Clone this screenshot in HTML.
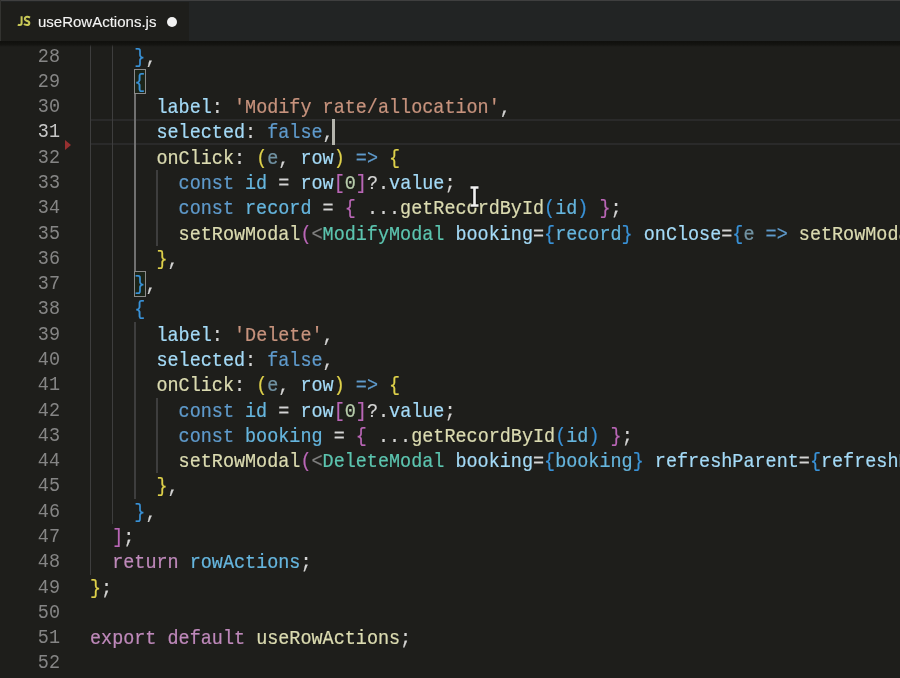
<!DOCTYPE html><html><head><meta charset="utf-8"><style>
*{margin:0;padding:0;box-sizing:border-box}
html,body{width:900px;height:678px;overflow:hidden;background:#1e1e1a}
body{position:relative;font-family:"Liberation Mono",monospace;filter:blur(0.4px) saturate(0.85)}
#tabs{position:absolute;left:0;top:0;width:900px;height:41px;background:#222424;border-top:1px solid #3f3f3f}
#tab{position:absolute;left:1px;top:1px;width:188px;height:40px;background:#1e1e1a}
#lb{position:absolute;left:0;top:0;width:1px;height:41px;background:#33332f}
#jsic{position:absolute;left:18px;top:14px;font-family:"Liberation Sans",sans-serif;font-weight:bold;font-size:11px;color:#cbcb41;letter-spacing:0px}
#tname{-webkit-text-stroke:0.12px #f4f4f4;position:absolute;left:38px;top:12.5px;font-family:"Liberation Sans",sans-serif;font-size:15px;color:#f4f4f4}
#dot{position:absolute;left:166.5px;top:16.8px;width:10px;height:10px;border-radius:50%;background:#f2f2f2}
#shadow{position:absolute;left:0;top:41px;width:900px;height:6px;background:linear-gradient(#10100d 0,#131310 55%,rgba(30,30,26,0) 100%)}
.ln{position:absolute;left:0;transform:translateY(1.2px) scaleY(1.1);transform-origin:0 17.54px;width:60.0px;text-align:right;color:#858585;font-size:18.464px;line-height:25.29px;height:25.29px;white-space:pre}
.ln.act{color:#c6c6c6}
.cl{-webkit-text-stroke:0.2px currentColor;position:absolute;left:90.0px;transform:translateY(2.0px) scaleY(1.06);transform-origin:0 17.54px;font-size:18.464px;line-height:25.29px;height:25.29px;white-space:pre;color:#d4d4d4}
.ig{position:absolute;width:1.3px;background:#3e3e3e}
.ig.a{background:#707070}
.hl{position:absolute;left:90.0px;width:810px;border-top:2.6px solid #2a2a2a;border-bottom:2.6px solid #2a2a2a}
.p{color:#d4d4d4}.k{color:#569cd6}.c{color:#c586c0}.pr{color:#9cdcfe}.s{color:#ce9178}.n{color:#b5cea8}.f{color:#dcdcaa}
.u{opacity:.62}.v{color:#5ab8e8}.t{color:#4ec9b0}.g{color:#808080}.b1{color:#e2d234}.b2{color:#c462c0}.b3{color:#2c94e6}
.bm{position:absolute;border:1.3px solid #8a8a8a;background:rgba(0,100,0,.1)}
#cur{position:absolute;width:2.7px;background:#b4b4ac}
#tri{position:absolute;left:64.5px;top:140px;width:0;height:0;border-top:5px solid transparent;border-bottom:5px solid transparent;border-left:6.5px solid #a42c2c}
</style></head><body>
<div id="tabs"><div id="tab"></div></div><div id="lb"></div>
<svg style="position:absolute;left:0;top:0" width="40" height="40"><path d="M21.6 16.2V23.3Q21.6 25 19.8 25Q18.6 25 17.9 24.4" stroke="#cbcb45" stroke-width="2.0" fill="none"/><path d="M30 17.6Q28.5 16.6 26.8 16.8Q24.6 17.1 24.9 19.2Q25.2 20.5 27.2 21Q29.5 21.6 29.3 23.3Q29.1 25 26.8 25Q25 25 23.9 24.1" stroke="#cbcb45" stroke-width="2.0" fill="none"/></svg>
<div id="tname">useRowActions.js</div><div id="dot"></div>
<div class="hl" style="top:119.37px;height:25.29px"></div>
<div class="ig" style="left:90.00px;top:43.50px;height:25.29px"></div>
<div class="ig" style="left:112.16px;top:43.50px;height:25.29px"></div>
<div class="ig" style="left:90.00px;top:68.79px;height:25.29px"></div>
<div class="ig" style="left:112.16px;top:68.79px;height:25.29px"></div>
<div class="ig" style="left:90.00px;top:94.08px;height:25.29px"></div>
<div class="ig" style="left:112.16px;top:94.08px;height:25.29px"></div>
<div class="ig a" style="left:134.32px;top:94.08px;height:25.29px"></div>
<div class="ig" style="left:90.00px;top:119.37px;height:25.29px"></div>
<div class="ig" style="left:112.16px;top:119.37px;height:25.29px"></div>
<div class="ig a" style="left:134.32px;top:119.37px;height:25.29px"></div>
<div class="ig" style="left:90.00px;top:144.66px;height:25.29px"></div>
<div class="ig" style="left:112.16px;top:144.66px;height:25.29px"></div>
<div class="ig a" style="left:134.32px;top:144.66px;height:25.29px"></div>
<div class="ig" style="left:90.00px;top:169.95px;height:25.29px"></div>
<div class="ig" style="left:112.16px;top:169.95px;height:25.29px"></div>
<div class="ig a" style="left:134.32px;top:169.95px;height:25.29px"></div>
<div class="ig" style="left:156.48px;top:169.95px;height:25.29px"></div>
<div class="ig" style="left:90.00px;top:195.24px;height:25.29px"></div>
<div class="ig" style="left:112.16px;top:195.24px;height:25.29px"></div>
<div class="ig a" style="left:134.32px;top:195.24px;height:25.29px"></div>
<div class="ig" style="left:156.48px;top:195.24px;height:25.29px"></div>
<div class="ig" style="left:90.00px;top:220.53px;height:25.29px"></div>
<div class="ig" style="left:112.16px;top:220.53px;height:25.29px"></div>
<div class="ig a" style="left:134.32px;top:220.53px;height:25.29px"></div>
<div class="ig" style="left:156.48px;top:220.53px;height:25.29px"></div>
<div class="ig" style="left:90.00px;top:245.82px;height:25.29px"></div>
<div class="ig" style="left:112.16px;top:245.82px;height:25.29px"></div>
<div class="ig a" style="left:134.32px;top:245.82px;height:25.29px"></div>
<div class="ig" style="left:90.00px;top:271.11px;height:25.29px"></div>
<div class="ig" style="left:112.16px;top:271.11px;height:25.29px"></div>
<div class="ig" style="left:90.00px;top:296.40px;height:25.29px"></div>
<div class="ig" style="left:112.16px;top:296.40px;height:25.29px"></div>
<div class="ig" style="left:90.00px;top:321.69px;height:25.29px"></div>
<div class="ig" style="left:112.16px;top:321.69px;height:25.29px"></div>
<div class="ig" style="left:134.32px;top:321.69px;height:25.29px"></div>
<div class="ig" style="left:90.00px;top:346.98px;height:25.29px"></div>
<div class="ig" style="left:112.16px;top:346.98px;height:25.29px"></div>
<div class="ig" style="left:134.32px;top:346.98px;height:25.29px"></div>
<div class="ig" style="left:90.00px;top:372.27px;height:25.29px"></div>
<div class="ig" style="left:112.16px;top:372.27px;height:25.29px"></div>
<div class="ig" style="left:134.32px;top:372.27px;height:25.29px"></div>
<div class="ig" style="left:90.00px;top:397.56px;height:25.29px"></div>
<div class="ig" style="left:112.16px;top:397.56px;height:25.29px"></div>
<div class="ig" style="left:134.32px;top:397.56px;height:25.29px"></div>
<div class="ig" style="left:156.48px;top:397.56px;height:25.29px"></div>
<div class="ig" style="left:90.00px;top:422.85px;height:25.29px"></div>
<div class="ig" style="left:112.16px;top:422.85px;height:25.29px"></div>
<div class="ig" style="left:134.32px;top:422.85px;height:25.29px"></div>
<div class="ig" style="left:156.48px;top:422.85px;height:25.29px"></div>
<div class="ig" style="left:90.00px;top:448.14px;height:25.29px"></div>
<div class="ig" style="left:112.16px;top:448.14px;height:25.29px"></div>
<div class="ig" style="left:134.32px;top:448.14px;height:25.29px"></div>
<div class="ig" style="left:156.48px;top:448.14px;height:25.29px"></div>
<div class="ig" style="left:90.00px;top:473.43px;height:25.29px"></div>
<div class="ig" style="left:112.16px;top:473.43px;height:25.29px"></div>
<div class="ig" style="left:134.32px;top:473.43px;height:25.29px"></div>
<div class="ig" style="left:90.00px;top:498.72px;height:25.29px"></div>
<div class="ig" style="left:112.16px;top:498.72px;height:25.29px"></div>
<div class="ig" style="left:90.00px;top:524.01px;height:25.29px"></div>
<div class="ig" style="left:90.00px;top:549.30px;height:25.29px"></div>
<div class="bm" style="left:134.02px;top:68.79px;width:12.28px;height:25.69px"></div>
<div class="bm" style="left:134.02px;top:271.11px;width:12.28px;height:25.69px"></div>
<div class="ln" style="top:43.50px">28</div>
<div class="cl" style="top:43.50px"><span class="p">    </span><span class="b3">}</span><span class="p">,</span></div>
<div class="ln" style="top:68.79px">29</div>
<div class="cl" style="top:68.79px"><span class="p">    </span><span class="b3">{</span></div>
<div class="ln" style="top:94.08px">30</div>
<div class="cl" style="top:94.08px"><span class="p">      </span><span class="pr">label</span><span class="p">: </span><span class="s">'Modify rate/allocation'</span><span class="p">,</span></div>
<div class="ln act" style="top:119.37px">31</div>
<div class="cl" style="top:119.37px"><span class="p">      </span><span class="pr">selected</span><span class="p">: </span><span class="k">false</span><span class="p">,</span></div>
<div class="ln" style="top:144.66px">32</div>
<div class="cl" style="top:144.66px"><span class="p">      </span><span class="f">onClick</span><span class="p">: </span><span class="b1">(</span><span class="pr u">e</span><span class="p">, </span><span class="pr">row</span><span class="b1">)</span><span class="p"> </span><span class="k">=&gt;</span><span class="p"> </span><span class="b1">{</span></div>
<div class="ln" style="top:169.95px">33</div>
<div class="cl" style="top:169.95px"><span class="p">        </span><span class="k">const</span><span class="p"> </span><span class="v">id</span><span class="p"> = </span><span class="pr">row</span><span class="b2">[</span><span class="n">0</span><span class="b2">]</span><span class="p">?.</span><span class="pr">value</span><span class="p">;</span></div>
<div class="ln" style="top:195.24px">34</div>
<div class="cl" style="top:195.24px"><span class="p">        </span><span class="k">const</span><span class="p"> </span><span class="v">record</span><span class="p"> = </span><span class="b2">{</span><span class="p"> ...</span><span class="f">getRecordById</span><span class="b3">(</span><span class="v">id</span><span class="b3">)</span><span class="p"> </span><span class="b2">}</span><span class="p">;</span></div>
<div class="ln" style="top:220.53px">35</div>
<div class="cl" style="top:220.53px"><span class="p">        </span><span class="f">setRowModal</span><span class="b2">(</span><span class="g">&lt;</span><span class="t">ModifyModal</span><span class="p"> </span><span class="pr">booking</span><span class="p">=</span><span class="b3">{</span><span class="v">record</span><span class="b3">}</span><span class="p"> </span><span class="pr">onClose</span><span class="p">=</span><span class="b3">{</span><span class="pr u">e</span><span class="p"> </span><span class="k">=&gt;</span><span class="p"> </span><span class="f">setRowModal</span><span class="b1">(</span></div>
<div class="ln" style="top:245.82px">36</div>
<div class="cl" style="top:245.82px"><span class="p">      </span><span class="b1">}</span><span class="p">,</span></div>
<div class="ln" style="top:271.11px">37</div>
<div class="cl" style="top:271.11px"><span class="p">    </span><span class="b3">}</span><span class="p">,</span></div>
<div class="ln" style="top:296.40px">38</div>
<div class="cl" style="top:296.40px"><span class="p">    </span><span class="b3">{</span></div>
<div class="ln" style="top:321.69px">39</div>
<div class="cl" style="top:321.69px"><span class="p">      </span><span class="pr">label</span><span class="p">: </span><span class="s">'Delete'</span><span class="p">,</span></div>
<div class="ln" style="top:346.98px">40</div>
<div class="cl" style="top:346.98px"><span class="p">      </span><span class="pr">selected</span><span class="p">: </span><span class="k">false</span><span class="p">,</span></div>
<div class="ln" style="top:372.27px">41</div>
<div class="cl" style="top:372.27px"><span class="p">      </span><span class="f">onClick</span><span class="p">: </span><span class="b1">(</span><span class="pr u">e</span><span class="p">, </span><span class="pr">row</span><span class="b1">)</span><span class="p"> </span><span class="k">=&gt;</span><span class="p"> </span><span class="b1">{</span></div>
<div class="ln" style="top:397.56px">42</div>
<div class="cl" style="top:397.56px"><span class="p">        </span><span class="k">const</span><span class="p"> </span><span class="v">id</span><span class="p"> = </span><span class="pr">row</span><span class="b2">[</span><span class="n">0</span><span class="b2">]</span><span class="p">?.</span><span class="pr">value</span><span class="p">;</span></div>
<div class="ln" style="top:422.85px">43</div>
<div class="cl" style="top:422.85px"><span class="p">        </span><span class="k">const</span><span class="p"> </span><span class="v">booking</span><span class="p"> = </span><span class="b2">{</span><span class="p"> ...</span><span class="f">getRecordById</span><span class="b3">(</span><span class="v">id</span><span class="b3">)</span><span class="p"> </span><span class="b2">}</span><span class="p">;</span></div>
<div class="ln" style="top:448.14px">44</div>
<div class="cl" style="top:448.14px"><span class="p">        </span><span class="f">setRowModal</span><span class="b2">(</span><span class="g">&lt;</span><span class="t">DeleteModal</span><span class="p"> </span><span class="pr">booking</span><span class="p">=</span><span class="b3">{</span><span class="v">booking</span><span class="b3">}</span><span class="p"> </span><span class="pr">refreshParent</span><span class="p">=</span><span class="b3">{</span><span class="pr">refreshParent</span><span class="b3">}</span></div>
<div class="ln" style="top:473.43px">45</div>
<div class="cl" style="top:473.43px"><span class="p">      </span><span class="b1">}</span><span class="p">,</span></div>
<div class="ln" style="top:498.72px">46</div>
<div class="cl" style="top:498.72px"><span class="p">    </span><span class="b3">}</span><span class="p">,</span></div>
<div class="ln" style="top:524.01px">47</div>
<div class="cl" style="top:524.01px"><span class="p">  </span><span class="b2">]</span><span class="p">;</span></div>
<div class="ln" style="top:549.30px">48</div>
<div class="cl" style="top:549.30px"><span class="p">  </span><span class="c">return</span><span class="p"> </span><span class="v">rowActions</span><span class="p">;</span></div>
<div class="ln" style="top:574.59px">49</div>
<div class="cl" style="top:574.59px"><span class="b1">}</span><span class="p">;</span></div>
<div class="ln" style="top:599.88px">50</div>
<div class="cl" style="top:599.88px"></div>
<div class="ln" style="top:625.17px">51</div>
<div class="cl" style="top:625.17px"><span class="c">export</span><span class="p"> </span><span class="c">default</span><span class="p"> </span><span class="f">useRowActions</span><span class="p">;</span></div>
<div class="ln" style="top:650.46px">52</div>
<div class="cl" style="top:650.46px"></div>
<div id="cur" style="left:332.26px;top:119.07px;height:25.89px"></div>
<div id="tri"></div>
<div id="shadow"></div>
<svg style="position:absolute;left:468px;top:185px" width="13" height="23" viewBox="0 0 13 23"><path d="M2.5 2.5h8M2.5 20.5h8M6.5 2.5v18" stroke="#151515" stroke-width="4.6" fill="none"/><path d="M2.5 2.5h8M2.5 20.5h8M6.5 2.5v18" stroke="#f0f0f0" stroke-width="2.6" fill="none"/></svg>
</body></html>
